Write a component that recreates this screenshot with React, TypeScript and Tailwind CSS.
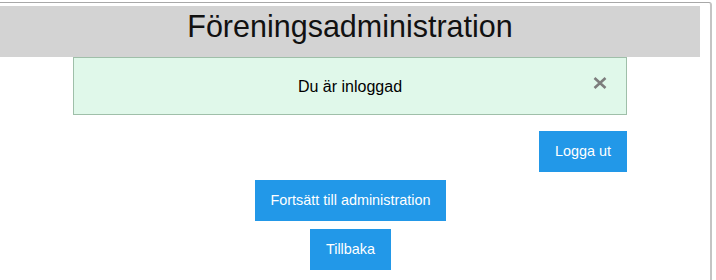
import React from 'react';

const CloseIcon: React.FC = () => (
  <svg width="14" height="12" viewBox="0 0 14 12" className="block">
    <path d="M1.5 1 L12.5 11 M12.5 1 L1.5 11" stroke="#7d7d7d" strokeWidth="2.6" strokeLinecap="butt" fill="none" />
  </svg>
);

const Button: React.FC<{ label: string }> = ({ label }) => (
  <button className="bg-[#2298e8] text-white text-[14.4px] leading-[17px] px-4 py-3 cursor-pointer">
    {label}
  </button>
);

export default function App() {
  return (
    <div className="w-[716px] h-[280px] bg-white overflow-hidden font-['Liberation_Sans',Arial,sans-serif] text-black">
      <div className="mt-[2px] w-[712px] h-[278px] border-t border-r-2 border-t-[#a8a8a8] border-r-[#c4c4c4] rounded-tr-[3px] pt-[3px]">
        <div className="w-[700px]">
          <header className="h-[51px] bg-[#d3d3d3] pt-[3px] text-center">
            <h1 className="text-[30.5px] leading-[34px] text-[#111]">Föreningsadministration</h1>
          </header>

          <div className="relative mx-auto w-[554px] h-[58px] border border-[#9fbfa9] bg-[#e0f8ea] flex items-center justify-center">
            <p className="text-[16px] leading-[18px] pt-[2px]">Du är inloggad</p>
            <span className="absolute right-[19px] top-[19px]">
              <CloseIcon />
            </span>
          </div>

          <div className="flex justify-end pr-[73px] mt-4">
            <Button label="Logga ut" />
          </div>

          <div className="flex flex-col items-center gap-2 mt-2 pl-[1px]">
            <Button label="Fortsätt till administration" />
            <Button label="Tillbaka" />
          </div>
        </div>
      </div>
    </div>
  );
}
